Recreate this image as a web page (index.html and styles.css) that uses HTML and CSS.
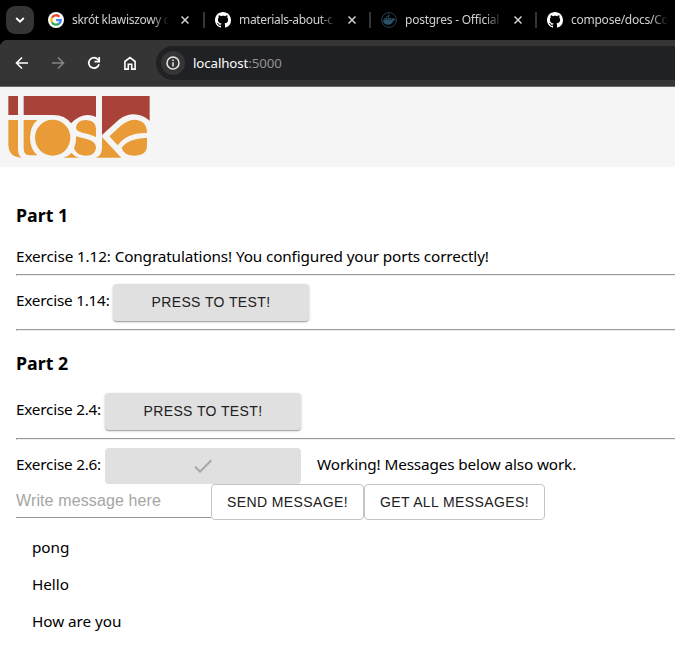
FILE: index.html
```html
<!DOCTYPE html>
<html lang="en">
<head>
<meta charset="utf-8">
<title>localhost:5000</title>
<link rel="stylesheet" href="styles.css">
</head>
<body>
<svg class="defs" aria-hidden="true">
  <symbol id="github" viewBox="0 0 16 16"><path d="M8 0C3.58 0 0 3.58 0 8c0 3.54 2.29 6.53 5.47 7.59.4.07.55-.17.55-.38 0-.19-.01-.82-.01-1.49-2.01.37-2.53-.49-2.69-.94-.09-.23-.48-.94-.82-1.13-.28-.15-.68-.52-.01-.53.63-.01 1.08.58 1.23.82.72 1.21 1.87.87 2.33.66.07-.52.28-.87.51-1.07-1.78-.2-3.64-.89-3.64-3.95 0-.87.31-1.59.82-2.15-.08-.2-.36-1.02.08-2.12 0 0 .67-.21 2.2.82.64-.18 1.32-.27 2-.27s1.36.09 2 .27c1.53-1.04 2.2-.82 2.2-.82.44 1.1.16 1.92.08 2.12.51.56.82 1.27.82 2.15 0 3.07-1.87 3.75-3.65 3.95.29.25.54.73.54 1.48 0 1.07-.01 1.93-.01 2.2 0 .21.15.46.55.38A8.01 8.01 0 0 0 16 8c0-4.42-3.58-8-8-8Z" fill="#fff"/></symbol>
  <symbol id="close" viewBox="0 0 8 8"><path d="M.5.5l7 7M7.5.5l-7 7" fill="none" stroke="#d0d0d0" stroke-width="1.5"/></symbol>
</svg>
<div class="tabs">
  <div class="tab-search"><svg width="10" height="6" viewBox="0 0 10 6"><path d="M1.2 1l3.8 3.7L8.8 1" fill="none" stroke="#fff" stroke-width="1.8"/></svg></div>
  <div class="tab">
    <svg class="favicon" viewBox="0 0 16 16"><circle cx="8" cy="8" r="8" fill="#fff"/><g fill="none" stroke-width="2.3"><path d="M3.9 5.7A4.7 4.7 0 0 1 11.4 4.7" stroke="#ea4335"/><path d="M3.9 5.7a4.7 4.7 0 0 0 0 4.6" stroke="#fbbc05"/><path d="M3.9 10.3a4.7 4.7 0 0 0 7.1 1.3" stroke="#34a853"/><path d="M11 11.6A4.7 4.7 0 0 0 12.7 8.1H8.1" stroke="#4285f4"/></g></svg>
    <span class="tab-title">skrót klawiszowy c</span><svg class="close"><use href="#close"/></svg>
  </div>
  <div class="tab">
    <svg class="favicon"><use href="#github"/></svg>
    <span class="tab-title">materials-about-c</span><svg class="close"><use href="#close"/></svg>
  </div>
  <div class="tab">
    <svg class="favicon" viewBox="0 0 16 16"><circle cx="8" cy="8" r="7.4" fill="none" stroke="#243f51"/><path d="M2 7.8h9.2c.1-1 .1-1.8.8-2.3.7.4.9 1 .9 1.6.6-.1 1.1 0 1.5.3-.4.8-1.1 1.1-1.9 1.1-1 3-3 4.2-5.6 4.2C3.7 12.7 2 11 2 7.8ZM3.2 6h1.5v1.4H3.2Zm1.9 0h1.5v1.4H5.1ZM7 6h1.5v1.4H7Zm1.900 0h1.500v1.400H8.900ZM5.100 4.200h1.500v1.400H5.100ZM7 4.200h1.500v1.400H7ZM7 2.500h1.500v1.300H7Z" fill="#2b536c"/></svg>
    <span class="tab-title official">postgres - Official</span><svg class="close"><use href="#close"/></svg>
  </div>
  <div class="tab">
    <svg class="favicon"><use href="#github"/></svg>
    <span class="tab-title compose">compose/docs/Co</span>
  </div>
</div>
<div class="toolbar">
  <svg class="nav" viewBox="0 0 16 16"><path d="M14 8H3M8 2.5L2.5 8 8 13.5" fill="none" stroke="#fff" stroke-width="1.6"/></svg>
  <svg class="nav" viewBox="0 0 16 16"><path d="M2 8h11M8 2.5L13.5 8 8 13.5" fill="none" stroke="#858585" stroke-width="1.6"/></svg>
  <svg class="nav" viewBox="0 0 16 16"><path d="M13 9.200A5.200 5.200 0 1 1 11.900 4.500L13 5.700" fill="none" stroke="#fff" stroke-width="1.700"/><path d="M13.200 2v4.700H8.500" fill="none" stroke="#fff" stroke-width="1.700"/></svg>
  <svg class="nav" viewBox="0 0 16 16"><path d="M2.900 14.100V6.500L8 2.600l5.100 3.900v7.600H9.700V9.300H6.300v4.800Z" fill="none" stroke="#fff" stroke-width="1.600"/></svg>
  <div class="address">
    <span class="info"><svg width="14" height="14" viewBox="0 0 14 14"><circle cx="7" cy="7" r="6" fill="none" stroke="#e8e8e8" stroke-width="1.5"/><path d="M7 6.200v4.200M7 3.500v1.500" stroke="#e8e8e8" stroke-width="1.5"/></svg></span>
    <span class="url">localhost<span class="port">:5000</span></span>
  </div>
</div>
<header class="banner">
  <svg class="logo" viewBox="24 30 426 186" role="img" aria-label="toska">
    <g fill="#a94238"><path d="M25 30H54V87H25Z"/><path d="M71 30H288V93Q250 75 213 112Q195 87 160 87H71Z"/><path d="M306 30H449V104Q404 68 358 100L306 147Z"/></g>
    <g fill="#e99b37">
      <path d="M25 102H54V188Q54 208 64 215Q25 213 25 175Z"/>
      <path d="M71 102H112Q90 122 90 155Q90 188 112 208H92Q71 208 71 188Z"/>
      <ellipse cx="158" cy="155" rx="53" ry="54"/>
      <path d="M228 126Q230 102 258 102Q288 104 288 128V153Q270 144 247 140Q229 136 228 126Z"/>
      <path d="M228 151Q240 154 260 159Q289 166 288 186Q286 209 256 209Q230 209 222 187Q230 170 228 151Z"/>
      <path d="M190 215Q207 210 215 200Q223 212 238 215Z"/>
      <path d="M306 153L364 215H288Q306 209 306 185Z"/>
      <path d="M328 151L364 118Q384 101 405 101Q441 104 441 141Q382 139 353 178Z"/>
      <path d="M441 155V178Q441 208 405 209Q370 208 365 185Q383 158 441 155Z"/>
    </g>
  </svg>
</header>
<main>
  <h3>Part 1</h3>
  <div class="line">Exercise 1.12: Congratulations! You configured your ports correctly!</div>
  <hr>
  <div class="row"><span class="label wide">Exercise 1.14:</span><button class="contained">PRESS TO TEST!</button></div>
  <hr>
  <h3 class="second">Part 2</h3>
  <div class="row"><span class="label">Exercise 2.4:</span><button class="contained">PRESS TO TEST!</button></div>
  <hr>
  <div class="row done"><span class="label">Exercise 2.6:</span><button class="contained disabled" disabled aria-label="Done"><svg width="24" height="24" viewBox="0 0 24 24"><path d="M9 16.170L4.830 12l-1.420 1.410L9 19 21 7l-1.410-1.410z" fill="#a6a6a6"/></svg></button><span class="result">Working! Messages below also work.</span></div>
  <div class="form"><input placeholder="Write message here" aria-label="Message"><button class="outlined send">SEND MESSAGE!</button><button class="outlined get">GET ALL MESSAGES!</button></div>
  <div class="messages"><p>pong</p><p>Hello</p><p>How are you</p></div>
</main>
</body>
</html>
```
FILE: styles.css
```css
* { box-sizing: border-box; }
body { margin: 0; width: 675px; height: 648px; overflow: hidden; background: #fff; color: #000; font: 15.3px/24px "Noto Sans", "Open Sans", sans-serif; letter-spacing: -.13px; }
.defs { display: none; }
.tabs { height: 40px; background: #000; display: flex; align-items: center; padding-left: 6px; }
.tab-search { width: 28px; height: 28px; flex: none; border-radius: 9px; background: #353535; display: flex; align-items: center; justify-content: center; margin-right: 14px; }
.tab { width: 155px; height: 16px; flex: none; display: flex; align-items: center; }
.tab + .tab { border-left: 2px solid #353535; padding-left: 10px; width: 166px; }
.favicon { width: 16px; height: 16px; flex: none; margin-right: 8px; }
.tab-title { width: 98px; flex: none; white-space: nowrap; color: #d0d0d0; font-size: 12px; line-height: 18px; letter-spacing: -.33px; -webkit-mask-image: linear-gradient(90deg, #000 82%, transparent 99%); mask-image: linear-gradient(90deg, #000 82%, transparent 99%); }
.official { letter-spacing: -.25px; }
.compose { letter-spacing: -.25px; }
.close { width: 8px; height: 8px; flex: none; margin-left: 11px; }
.toolbar { height: 47px; background: radial-gradient(circle at 8px 8px, #353535 8px, #000 8.5px) 0 0 / 8px 8px no-repeat #353535; border-bottom: 1px solid #6b696b; display: flex; align-items: center; padding-left: 14px; }
.nav { width: 16px; height: 16px; flex: none; margin-right: 20px; }
.address { flex: 1; height: 34px; margin-left: -2px; background: #202124; border-radius: 17px 0 0 17px; display: flex; align-items: center; padding-left: 5px; }
.info { width: 24px; height: 24px; border-radius: 50%; background: #353535; display: flex; align-items: center; justify-content: center; margin-right: 8px; }
.url { color: #fff; font-size: 13.3px; letter-spacing: -.1px; }
.port { color: #929292; }
.banner { height: 80px; background: #f5f5f5; padding: 9px 8px; }
.logo { display: block; width: 142px; height: 62px; }
main { padding: 0 0 0 16px; }
h3 { margin: 0; padding-top: 37px; height: 78px; font-size: 17.8px; line-height: 22px; font-weight: 700; letter-spacing: 0; }
.second { padding-top: 13px; height: 54px; }
.line { height: 22px; line-height: 22px; white-space: nowrap; }
hr { margin: 7px 0 8px; height: 2px; border: 1px solid #9a9a9a; border-bottom-color: #eee; border-right: 0; }
.row { height: 38px; display: flex; align-items: flex-start; white-space: nowrap; }
.done { height: 36px; }
.label { width: 89px; flex: none; padding-top: 4px; letter-spacing: -.22px; }
.wide { width: 97px; }
button { padding: 0; font: 14px/22px "Liberation Sans", Arial, sans-serif; letter-spacing: .4px; }
.contained { width: 196px; height: 37px; border: 0; border-radius: 4px; padding-bottom: 1px; background: #e0e0e0; color: #202020; box-shadow: 0 1px 3px #0003, 0 1px 1px #0002, 0 2px 1px -1px #0002; }
.disabled { box-shadow: none; height: 36px; padding: 0; }
.disabled svg { display: block; margin: auto; }
.result { margin-left: 16px; padding-top: 4px; }
.form { display: flex; }
input { width: 195px; height: 34px; border: 0; border-bottom: 1px solid #949494; padding: 0; font: 16px "Liberation Sans", Arial, sans-serif; letter-spacing: .12px; background: transparent; }
input::placeholder { color: #a5a5a5; opacity: 1; }
.outlined { height: 36px; border: 1px solid #c4c4c4; border-radius: 4px; background: #fff; color: #202020; padding-bottom: 1px; }
.send { width: 153px; }
.get { width: 181px; }
.messages { padding: 15px 0 0 16px; letter-spacing: -.05px; }
.messages p { margin: 0 0 13px; }
```
